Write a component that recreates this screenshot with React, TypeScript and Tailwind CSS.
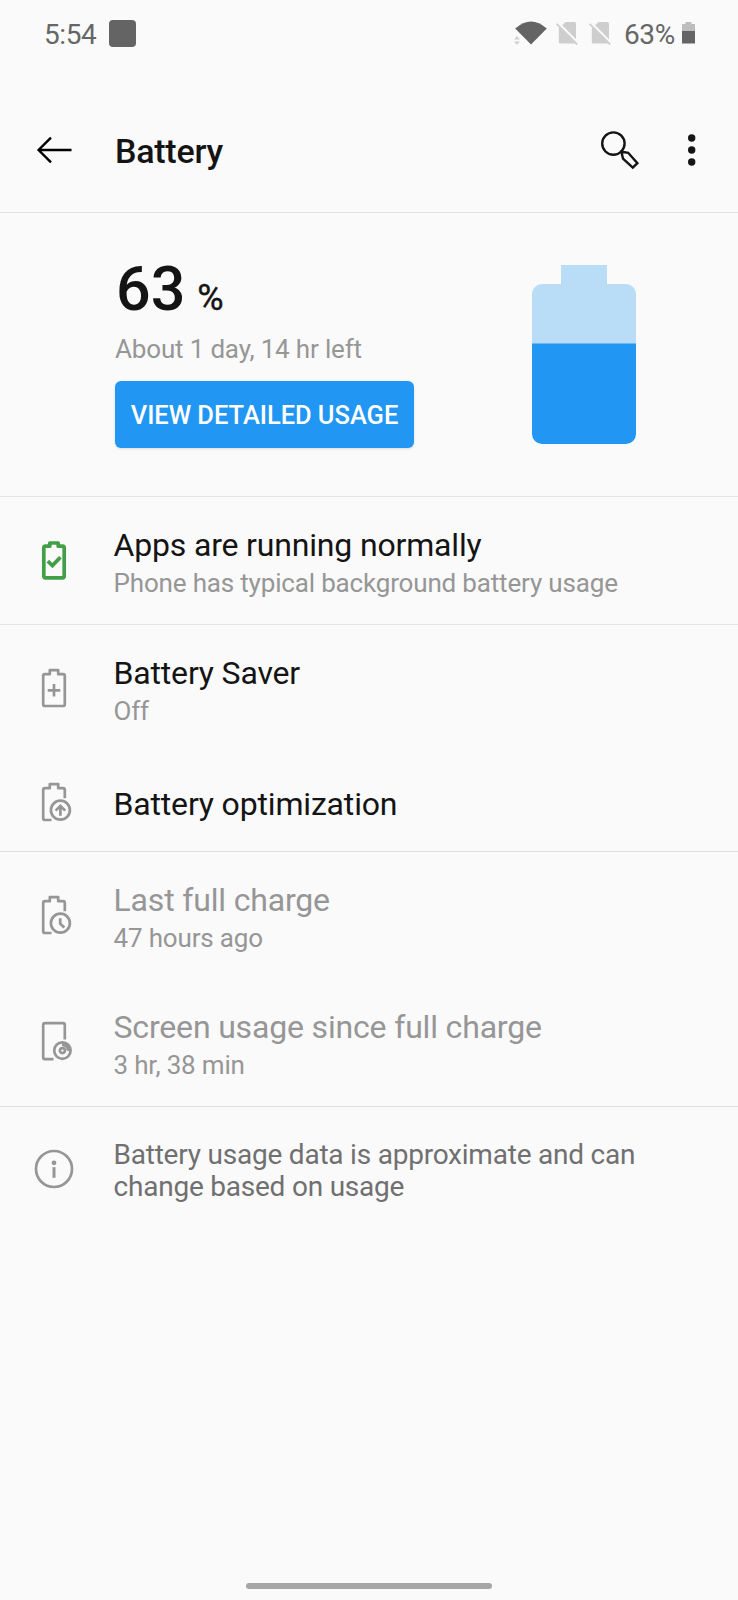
import type { ReactNode } from "react";

type IconProps = { children?: ReactNode };

const GrayIcon = ({ children }: IconProps) => (
  <svg
    viewBox="0 0 48 48"
    className="size-12 fill-none stroke-[#969696]"
    strokeWidth="2.7"
    strokeLinejoin="round"
  >
    {children}
  </svg>
);

const GreenCheckIcon = () => (
  <svg
    viewBox="0 0 48 48"
    className="size-12 fill-none stroke-[#439f47]"
    strokeWidth="3.7"
  >
    <path
      strokeLinejoin="round"
      d="M19.8 10.2H15.6a1.8 1.8 0 0 0-1.8 1.8V40a1.8 1.8 0 0 0 1.8 1.8H32.4a1.8 1.8 0 0 0 1.8-1.8V12a1.8 1.8 0 0 0-1.8-1.8H28.2V7H19.8z"
    />
    <path d="M17.8 25.2l4.6 4.4 8-8.4" />
  </svg>
);

const SaverIcon = () => (
  <GrayIcon>
    <path d="M19.8 10.2H15a1.8 1.8 0 0 0-1.8 1.8V40.2a1.8 1.8 0 0 0 1.8 1.8H33a1.8 1.8 0 0 0 1.8-1.8V12a1.8 1.8 0 0 0-1.8-1.8H28.2V6.2H19.8z" />
    <path d="M24 20v12.6M17.7 26.3h12.6" />
  </GrayIcon>
);

const openBattery =
  "M34.8 20.2V12a1.8 1.8 0 0 0-1.8-1.8H28.2V6.2H19.8v4H15a1.8 1.8 0 0 0-1.8 1.8V40.2a1.8 1.8 0 0 0 1.8 1.8H21.5";

const OptimizationIcon = () => (
  <GrayIcon>
    <path d={openBattery} />
    <circle cx="30.4" cy="32.2" r="9.5" />
    <path d="M30.4 37.8V28M25.6 32.6l4.8-4.8 4.8 4.8" strokeLinejoin="miter" />
  </GrayIcon>
);

const LastChargeIcon = () => (
  <GrayIcon>
    <path d={openBattery} />
    <circle cx="30.4" cy="32.2" r="9.5" />
    <path d="M30.2 27.2v5.6l4.2 3.6" />
  </GrayIcon>
);

const ScreenIcon = () => (
  <GrayIcon>
    <path d="M34.8 21.5V7A1.8 1.8 0 0 0 33 5.2H15A1.8 1.8 0 0 0 13.2 7V39.4a1.8 1.8 0 0 0 1.8 1.8H23.5" />
    <circle cx="32.4" cy="32.6" r="8.2" />
    <path
      d="M32.4 24.4v3.6a4.6 4.6 0 0 1 4.6 4.6h3.6a8.2 8.2 0 0 0-8.2-8.2z"
      className="fill-[#969696]"
      strokeWidth="0.8"
    />
    <circle cx="32.4" cy="32.6" r="2.5" strokeWidth="2.6" />
  </GrayIcon>
);

const InfoIcon = () => (
  <GrayIcon>
    <circle cx="24" cy="24" r="18" />
    <circle cx="24" cy="17.8" r="2.4" className="fill-[#969696] stroke-none" />
    <path d="M24 22.2v10.6" strokeWidth="3" />
  </GrayIcon>
);

const NoSimIcon = () => (
  <svg viewBox="0 0 22 24" className="h-6 w-[22px]">
    <path
      d="M9.5 1H18.4a1.6 1.6 0 0 1 1.6 1.6V21a1.6 1.6 0 0 1-1.6 1.6H4.4A1.6 1.6 0 0 1 2.8 21V7.4z"
      className="fill-[#cecece]"
    />
    <path d="M1.6 1.4L22 22" className="stroke-[#fafafa]" strokeWidth="2.4" />
    <path d="M.6 2.8L21.2 23.4" className="stroke-[#cecece]" strokeWidth="1.8" />
  </svg>
);

const StatusBar = () => (
  <div className="flex h-[66px] items-center pr-[43px] pl-[44px] text-[28px] tracking-[-0.4px] text-[#666]">
    <span className="mt-[3px] w-[65px]">5:54</span>
    <span className="size-[27px] rounded-[4px] bg-[#646464]" />
    <svg viewBox="0 0 34 24" className="ml-auto h-6 w-[34px]">
      <path d="M1.2 7.6Q17 -6.4 32.8 7.6L17 23.6z" className="fill-[#646464]" />
      <path d="M0 18.4l3-3.4 3 3.4zM0 20.4l3 3.4 3-3.4z" className="fill-[#cecece]" />
    </svg>
    <span className="ml-[8px]">
      <NoSimIcon />
    </span>
    <span className="ml-[11px]">
      <NoSimIcon />
    </span>
    <span className="mt-[3px] ml-[13px] w-[50px]">63%</span>
    <svg viewBox="0 0 13 22" className="ml-2 h-[22px] w-[13px]">
      <path d="M3.5 0h6v2H13v7H0V2h3.5z" className="fill-[#bdbdbd]" />
      <path d="M0 9h13v12.5H0z" className="fill-[#646464]" />
    </svg>
  </div>
);

const Header = () => (
  <header className="flex h-[147px] items-center border-b border-[#e4e4e4] pt-[22px] pr-[42px] pl-[36px]">
    <svg
      viewBox="0 0 38 30"
      className="h-[30px] w-[38px] fill-none stroke-black"
      strokeWidth="2.4"
    >
      <path d="M35.5 15H3M15 2.6L2.6 15 15 27.4" />
    </svg>
    <h1 className="mt-[3px] ml-[41px] text-[34px] font-medium tracking-[-0.25px] text-[#141414]">
      Battery
    </h1>
    <svg
      viewBox="0 0 40 40"
      className="ml-auto size-10 fill-none stroke-[#141414]"
      strokeWidth="2.4"
    >
      <circle cx="13.4" cy="13.6" r="11.2" />
      <path d="M21.4 21.8l6.8 1L37.4 33.2 32.8 37.6 23 28.6z" />
    </svg>
    <svg viewBox="0 0 8 32" className="ml-12 h-8 w-2 fill-[#141414]">
      <circle cx="3.7" cy="4" r="3.7" />
      <circle cx="3.7" cy="16" r="3.7" />
      <circle cx="3.7" cy="28" r="3.7" />
    </svg>
  </header>
);

const Summary = () => (
  <section className="flex h-[284px] border-b border-[#e4e4e4] pl-[115px]">
    <div className="w-[417px]">
      <div className="mt-[40px] flex h-[72px] items-baseline pl-px text-[#141414]">
        <span className="text-[61px] leading-[72px] font-medium">63</span>
        <span className="ml-[12px] text-[36px] [-webkit-text-stroke:0.4px_#141414]">%</span>
      </div>
      <p className="mt-2 text-[26px] leading-8 tracking-[-0.17px] text-[#969696]">
        About 1 day, 14 hr left
      </p>
      <button className="mt-4 h-[67px] w-[299px] rounded-md bg-[#2196f3] pt-0.5 text-[25.5px] font-medium tracking-[-0.05px] whitespace-nowrap text-white shadow-sm">
        VIEW DETAILED USAGE
      </button>
    </div>
    <svg viewBox="0 0 104 180" className="mt-[52px] h-[180px] w-[104px]">
      <path
        d="M29 0h46v19h19a10 10 0 0 1 10 10v50H0V29a10 10 0 0 1 10-10h19z"
        className="fill-[#b9dcf7]"
      />
      <path
        d="M0 78.5h104V169a10 10 0 0 1-10 10H10a10 10 0 0 1-10-10z"
        className="fill-[#2196f3]"
      />
    </svg>
  </section>
);

type RowProps = {
  icon: ReactNode;
  title: string;
  subtitle?: string;
  muted?: boolean;
};

const Row = ({ icon, title, subtitle, muted }: RowProps) => (
  <div
    className={`flex items-center tracking-[-0.17px] ${subtitle ? "h-[127px]" : "h-[99px]"}`}
  >
    <div className={`ml-[30px] w-[83.5px] ${subtitle ? "mb-0.5" : ""}`}>{icon}</div>
    <div className={subtitle ? (muted ? "pt-1.5" : "pt-[7px]") : "pt-1"}>
      <div
        className={`text-[32px] leading-[38px] ${muted ? "text-[#969696]" : "text-[#141414]"}`}
      >
        {title}
      </div>
      {subtitle && (
        <div className="text-[26px] leading-[38px] text-[#969696]">{subtitle}</div>
      )}
    </div>
  </div>
);

export default function App() {
  return (
    <main className="flex h-[1600px] w-[738px] flex-col bg-[#fafafa] font-['Roboto',sans-serif]">
      <StatusBar />
      <Header />
      <Summary />
      <section className="border-b border-[#e4e4e4]">
        <Row
          icon={<GreenCheckIcon />}
          title="Apps are running normally"
          subtitle="Phone has typical background battery usage"
        />
      </section>
      <section className="border-b border-[#dedede]">
        <Row icon={<SaverIcon />} title="Battery Saver" subtitle="Off" />
        <Row icon={<OptimizationIcon />} title="Battery optimization" />
      </section>
      <section className="border-b border-[#dedede]">
        <Row icon={<LastChargeIcon />} title="Last full charge" subtitle="47 hours ago" muted />
        <Row
          icon={<ScreenIcon />}
          title="Screen usage since full charge"
          subtitle="3 hr, 38 min"
          muted
        />
      </section>
      <section className="flex h-[125px] items-center">
        <div className="mb-0.5 ml-[30px] w-[83.5px]">
          <InfoIcon />
        </div>
        <p className="w-[560px] pt-[3px] text-[28px] leading-8 tracking-[-0.22px] text-[#707070]">
          Battery usage data is approximate and can change based on usage
        </p>
      </section>
      <div className="mx-auto mt-auto mb-[11px] h-1.5 w-[246px] rounded-full bg-[#a6a6a6]" />
    </main>
  );
}
